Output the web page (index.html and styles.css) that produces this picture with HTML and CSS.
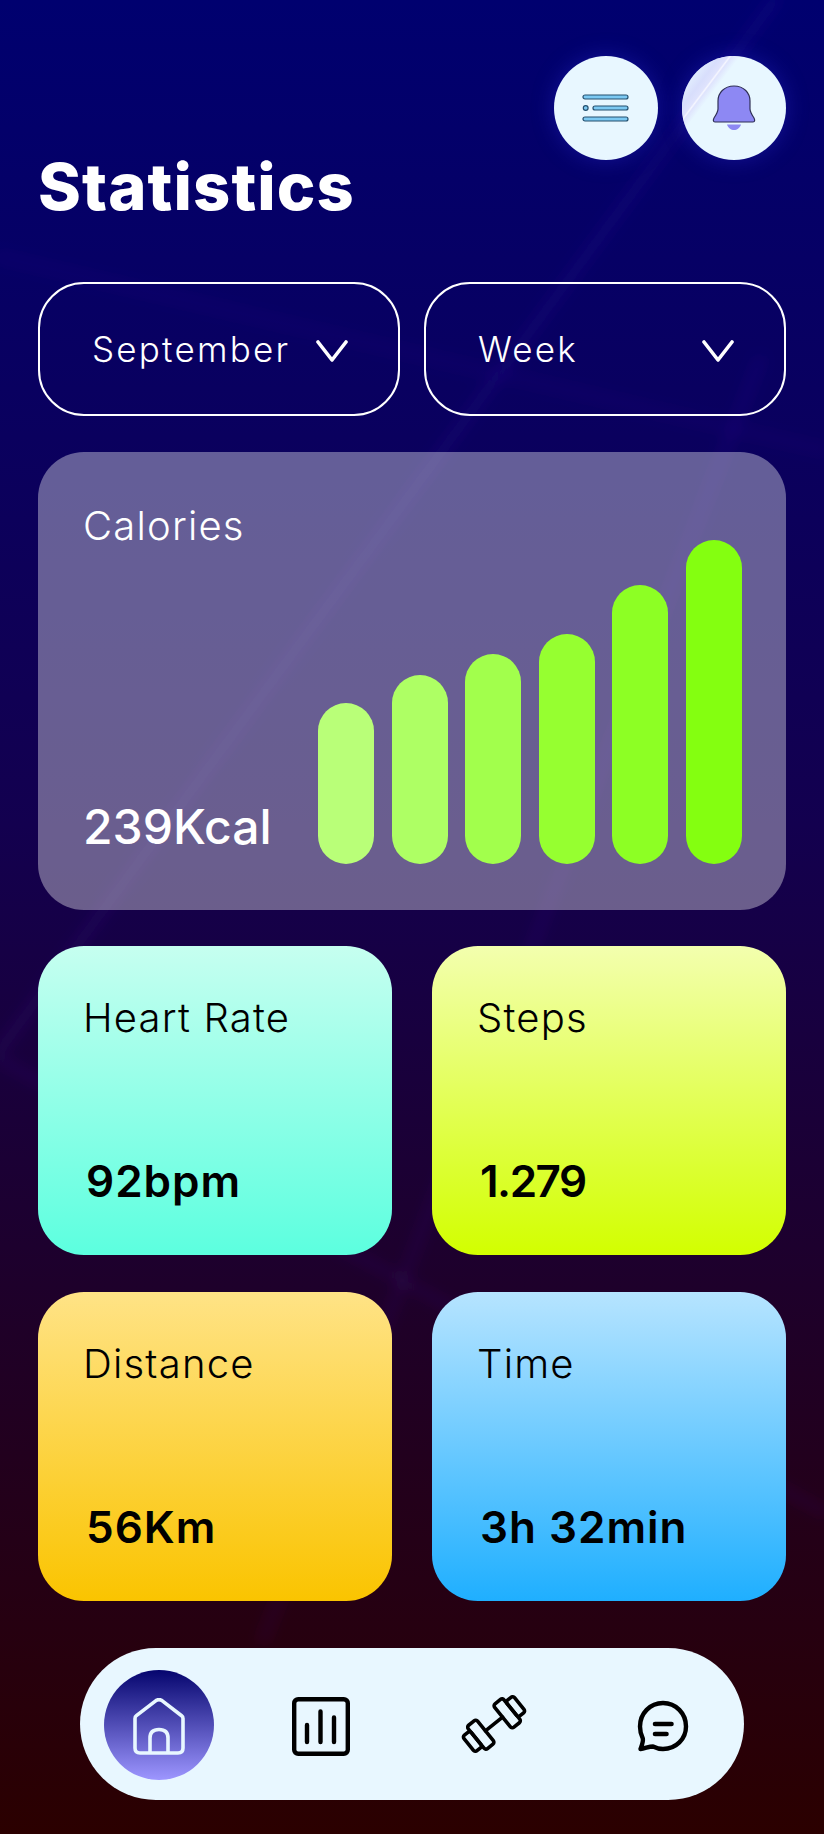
FILE: index.html
```html
<!DOCTYPE html>
<html lang="en">
<head>
    <meta charset="UTF-8">
    <meta name="viewport" content="width=device-width, initial-scale=1.0">
    <title>Statistics</title>
    <link rel="stylesheet" href="styles.css">
</head>
<body>
    <!-- faint light beams behind everything -->
    <svg class="beams" width="824" height="1834" viewBox="0 0 824 1834" aria-hidden="true">
        <defs>
            <filter id="soft" x="-20%" y="-20%" width="140%" height="140%"><feGaussianBlur stdDeviation="7"/></filter>
        </defs>
        <g filter="url(#soft)" fill="none" stroke="#5a28d8" stroke-opacity="0.1" stroke-linecap="round">
            <path d="M775 0 L0 1050" stroke-width="11"/>
            <path d="M760 360 L263 1640" stroke-width="9"/>
            <path d="M0 1060 L824 1512" stroke-width="9"/>
            <path d="M0 257 L824 450" stroke-width="12" stroke-opacity="0.05"/>
        </g>
    </svg>

    <div class="app">
        <header class="top">
            <h1>Statistics</h1>
            <div class="top-actions">
                <button class="round-btn">
                    <svg width="48" height="34" viewBox="0 0 48 34">
                        <g fill="#7cc9f2" stroke="#24506f" stroke-width="1.2">
                            <rect x="1" y="4" width="45" height="4" rx="2"/>
                            <circle cx="3.7" cy="17" r="2.4"/>
                            <rect x="11" y="15" width="35" height="4" rx="2"/>
                            <rect x="1" y="26" width="45" height="4" rx="2"/>
                        </g>
                    </svg>
                </button>
                <button class="round-btn">
                    <span class="glare"></span>
                    <svg class="bell" width="44" height="46" viewBox="0 0 44 46">
                        <path d="M22 1C12 1 6 8 6 16V24C6 27 4 30 2 33C1 35 1 37 3 37H41C43 37 43 35 42 33C40 30 38 27 38 24V16C38 8 32 1 22 1Z" fill="#8d88f3" stroke="#2f2f55" stroke-width="1.2"/>
                        <path d="M15 39.5H29C28 43 25 45 22 45C19 45 16 43 15 39.5Z" fill="#8d88f3"/>
                    </svg>
                </button>
            </div>
        </header>

        <div class="filters">
            <div class="select">
                <span>September</span>
                <svg class="chev" width="32" height="22" viewBox="0 0 32 22"><path d="M2 2L16 20L30 2"/></svg>
            </div>
            <div class="select">
                <span>Week</span>
                <svg class="chev" width="32" height="22" viewBox="0 0 32 22"><path d="M2 2L16 20L30 2"/></svg>
            </div>
        </div>

        <section class="calories">
            <div class="calories-text">
                <div class="label">Calories</div>
                <div class="calories-value">239Kcal</div>
            </div>
            <div class="bars">
                <div class="bar b1" style="height: 161px"></div>
                <div class="bar b2" style="height: 189px"></div>
                <div class="bar b3" style="height: 210px"></div>
                <div class="bar b4" style="height: 230px"></div>
                <div class="bar b5" style="height: 279px"></div>
                <div class="bar b6" style="height: 324px"></div>
            </div>
        </section>

        <section class="stats">
            <div class="stat heart">
                <div class="label">Heart Rate</div>
                <div class="value">92bpm</div>
            </div>
            <div class="stat steps">
                <div class="label">Steps</div>
                <div class="value narrow">1.279</div>
            </div>
            <div class="stat distance">
                <div class="label">Distance</div>
                <div class="value">56Km</div>
            </div>
            <div class="stat time">
                <div class="label">Time</div>
                <div class="value">3h 32min</div>
            </div>
        </section>

        <nav class="nav">
            <div class="nav-home">
                <svg width="52" height="58" viewBox="0 0 52 58" fill="none" stroke="#e8f7ff" stroke-width="3.6" stroke-linejoin="round">
                    <path d="M2 20.5C2 19.3 2.5 18.4 3.4 17.7L23 2.6C24.8 1.4 27.2 1.4 29 2.6L48.6 17.7C49.5 18.4 50 19.3 50 20.5V50C50 53.5 48.5 55 45 55H7C3.5 55 2 53.5 2 50Z"/>
                    <path d="M17 55V40C17 34 20.5 31.5 26 31.5C31.5 31.5 35 34 35 40V55"/>
                </svg>
            </div>
            <svg class="nav-icon nudge" width="58" height="59" viewBox="0 0 58 59">
                <rect x="2.2" y="2.2" width="53.6" height="54.6" rx="4"/>
                <path d="M15 28V45M28.5 14.5V45M42 20.5V45"/>
            </svg>
            <svg class="nav-icon" width="68" height="58" viewBox="-34 -29 68 58">
                <g transform="rotate(-39)" stroke-width="3.6">
                    <path d="M-11 0H11"/>
                    <rect x="11" y="-15" width="12" height="30" rx="2.5"/>
                    <rect x="23" y="-10" width="9.5" height="20" rx="2.5"/>
                    <rect x="-23" y="-15" width="12" height="30" rx="2.5"/>
                    <rect x="-32.5" y="-10" width="9.5" height="20" rx="2.5"/>
                </g>
            </svg>
            <svg class="nav-icon nudge-small" width="52" height="52" viewBox="0 0 52 52">
                <path d="M3.5 49C5 45 6.5 41.5 5.8 38.5C4 35 3 31 3 26.5C3 13.5 13 3 26 3C39 3 49 13.5 49 26.5C49 39 39 49 26 49C22 49 19 48 16 46.5C12 46.5 8 48.5 3.5 49Z"/>
                <path d="M18 24H34.5M18 34H29.5" stroke-width="4.6"/>
            </svg>
        </nav>
    </div>
</body>
</html>
```

FILE: styles.css
```css
* {
    box-sizing: border-box;
}

body {
    margin: 0;
    width: 824px;
    height: 1834px;
    position: relative;
    overflow: hidden;
    font-family: Inter, "Open Sans", sans-serif;
    color: #fff;
    background: linear-gradient(180deg, #00006f 0%, #13004f 45%, #2b0000 100%);
}

.beams {
    position: absolute;
    top: 0;
    left: 0;
}

.app {
    position: relative;
    padding: 56px 38px 0;
}

.top {
    display: flex;
    justify-content: space-between;
    align-items: flex-start;
    height: 226px;
}

h1 {
    margin: 92px 0 0;
    font-size: 65px;
    line-height: 78px;
    font-weight: 800;
    letter-spacing: 1.1px;
}

.top-actions {
    display: flex;
    gap: 24px;
}

.round-btn {
    position: relative;
    width: 104px;
    height: 104px;
    padding: 0;
    border: 0;
    border-radius: 50%;
    overflow: hidden;
    background-color: #e8f7ff;
    box-shadow: 0 0 22px rgba(50, 50, 230, 0.35);
    display: flex;
    align-items: center;
    justify-content: center;
}

.glare {
    position: absolute;
    inset: 0;
    background: linear-gradient(127deg, rgba(216, 222, 252, 0) 9%, #d8defc 21%, #dfe3fd 25.5%, #f6f7ff 26.5%, #dfe4fd 27.5%, rgba(223, 228, 253, 0) 32%);
}

.bell {
    position: relative;
}

.filters {
    display: flex;
    gap: 24px;
    margin-bottom: 36px;
}

.select {
    flex: 1;
    height: 134px;
    padding: 0 50px 0 52px;
    border: 2px solid #fff;
    border-radius: 46px;
    display: flex;
    align-items: center;
    justify-content: space-between;
    font-size: 35px;
    font-weight: 300;
    letter-spacing: 2.2px;
}

.chev {
    fill: none;
    stroke: #fff;
    stroke-width: 3.6;
    stroke-linecap: round;
    stroke-linejoin: round;
    margin-top: 4px;
}

.label {
    font-size: 40px;
    line-height: 48px;
    font-weight: 300;
    letter-spacing: 1.2px;
}

.calories {
    height: 458px;
    padding: 50px 44px 46px 45px;
    border-radius: 46px;
    background-color: rgba(255, 255, 255, 0.37);
    display: flex;
    justify-content: space-between;
    margin-bottom: 36px;
}

.calories-text {
    display: flex;
    flex-direction: column;
    justify-content: space-between;
}

.calories-value {
    font-size: 48px;
    line-height: 60px;
    font-weight: 500;
    margin-bottom: 7px;
}

.bars {
    display: flex;
    align-items: flex-end;
    gap: 17.6px;
}

.bar {
    width: 56px;
    border-radius: 28px;
}

.b1 { background-color: #b9ff78; }
.b2 { background-color: #aeff64; }
.b3 { background-color: #a2ff4c; }
.b4 { background-color: #96ff30; }
.b5 { background-color: #8dff24; }
.b6 { background-color: #84ff10; }

.stats {
    display: grid;
    grid-template-columns: 354px 354px;
    grid-auto-rows: 309px;
    column-gap: 40px;
    row-gap: 37px;
    margin-bottom: 47px;
}

.stat {
    padding: 48px 30px 48px 45px;
    border-radius: 46px;
    color: #000;
    display: flex;
    flex-direction: column;
    justify-content: space-between;
}

.value {
    font-size: 44px;
    line-height: 52px;
    font-weight: 600;
    letter-spacing: 1px;
    margin-left: 3px;
}

.value.narrow {
    letter-spacing: -1.5px;
}

.heart { background: linear-gradient(180deg, #c6fff0, #5cffdf); }
.steps { background: linear-gradient(180deg, #f3ffae, #d2ff00); }
.distance { background: linear-gradient(180deg, #ffe386, #fac400); }
.time { background: linear-gradient(180deg, #b6e4ff, #1fafff); }

.nav {
    margin: 0 42px;
    height: 152px;
    padding: 0 55px 0 24px;
    border-radius: 76px;
    background-color: #e8f7ff;
    display: flex;
    align-items: center;
    justify-content: space-between;
}

.nav-home {
    width: 110px;
    height: 110px;
    margin: 2px -31px 0 0;
    border-radius: 50%;
    background: linear-gradient(180deg, #05056e, #9d96ff);
    display: flex;
    align-items: center;
    justify-content: center;
}

.nav-home svg {
    margin-top: 3px;
}

.nav-icon {
    fill: none;
    stroke: #000;
    stroke-width: 4.4;
    stroke-linecap: round;
    stroke-linejoin: round;
}

.nudge {
    margin-top: 5px;
}

.nudge-small {
    margin-top: 3px;
}
```
